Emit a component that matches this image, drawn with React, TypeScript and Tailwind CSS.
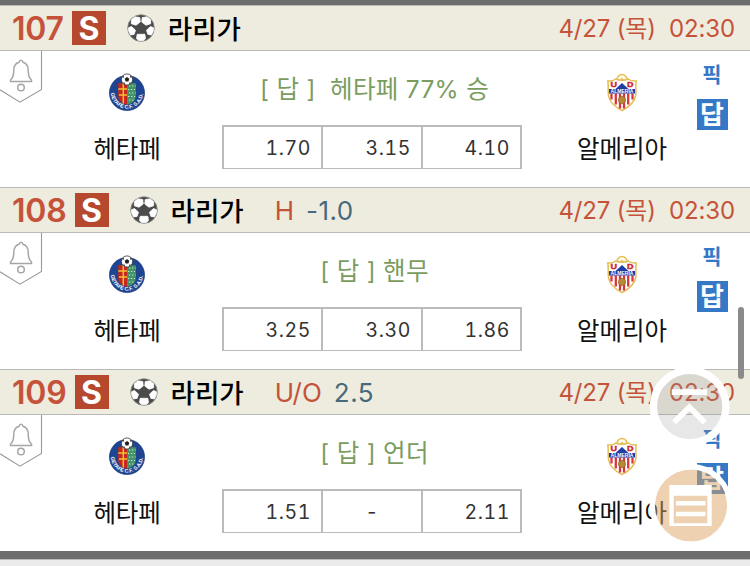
const KR = "font-['Inter','Noto_Sans_CJK_KR',sans-serif]";

type Match = {
  no: string;
  kind?: string;
  line?: string;
  tip: string;
  odds: string[];
};

const matches: Match[] = [
  { no: '107', tip: '[ 답 ]\u00a0\u00a0헤타페 77% 승', odds: ['1.70', '3.15', '4.10'] },
  { no: '108', kind: 'H', line: '-1.0', tip: '[ 답 ] 핸무', odds: ['3.25', '3.30', '1.86'] },
  { no: '109', kind: 'U/O', line: '2.5', tip: '[ 답 ] 언더', odds: ['1.51', '-', '2.11'] },
];

function Ball() {
  return (
    <svg width="28" height="28" viewBox="0 0 28 28" className="shrink-0">
      <circle cx="14" cy="14" r="13.3" fill="#4b4b4b" stroke="#8b8b88" strokeWidth="0.8" />
      <g fill="#fff" stroke="#fff" strokeWidth="0.8" strokeLinejoin="round">
        <path d="M4.500 5.500 8 2.800l4.800.8.400 4.400-4.200 3.200-4.700-1.500z" />
        <path d="M23.500 5.500 20 2.800l-4.800.8-.4 4.400 4.200 3.200 4.700-1.500z" />
        <path d="M1.400 13.800 4.500 12.500l4 3.700-1.400 4.200-3.400.5C2 18.700 1.300 16 1.400 13.800z" />
        <path d="M26.600 13.800 23.500 12.500l-4 3.700 1.400 4.200 3.400.5c1.700-2.200 2.400-4.900 2.300-7.100z" />
        <path d="M10.200 20.300h7.600l.7 4.300-2 2h-5l-2-2z" />
      </g>
    </svg>
  );
}

function Bell() {
  return (
    <svg width="43" height="53" viewBox="0 0 43 53" fill="none" className="block">
      <path d="M41.500 0V38.500L20 51.200 0 38.800" stroke="#999" strokeWidth="1.100" />
      <g stroke="#a6a6a6" strokeWidth="1.500">
        <path d="M21 9.300c-1 0-1.700.8-1.900 1.900-3.600.9-5.300 4-5.300 8 0 6-1.100 8-3.300 9.800v1.500h21V29c-2.200-1.800-3.300-3.800-3.300-9.800 0-4-1.700-7.100-5.300-8-.2-1.100-.9-1.900-1.900-1.900z" />
        <circle cx="21" cy="36.500" r="3.300" />
      </g>
    </svg>
  );
}

function Getafe() {
  return (
    <svg width="38" height="40" viewBox="0 0 38 40" className="block">
      <defs>
        <path id="ring" d="M2.800 19a16.200 16.600 0 0 0 32.400 0" />
      </defs>
      <circle cx="19" cy="20" r="17.600" fill="#1e4494" stroke="#16326f" strokeWidth="0.600" />
      <path d="M10 10h9v22c-5-1.500-9-4-9-9z" fill="#c9251f" />
      <path d="M19 10h9v13c0 5-4 7.500-9 9z" fill="#43946a" />
      <path d="M10 16h9M15.300 10v21M11 22h8" stroke="#f2c230" strokeWidth="1.500" />
      <path d="M21 13h7M20 16.500h7M21 20h7M20 23.500h7M21 27h5" stroke="#cfe5d6" strokeWidth="1.200" strokeDasharray="1.300 1.700" />
      <path d="M10 10h18v13c0 5-4 7.500-9 9-5-1.500-9-4-9-9z" fill="none" stroke="#2b4d68" strokeWidth="0.500" />
      <text fill="#fff" fontSize="5.200" fontWeight="800" fontFamily="Liberation Sans, sans-serif">
        <textPath href="#ring" startOffset="1">GETAFE C.F. S.A.D.</textPath>
      </text>
      <circle cx="19" cy="6.500" r="5.600" fill="#fff" stroke="#333" strokeWidth="0.800" />
      <path d="m19 4 2.300 1.700-.9 2.800h-2.800l-.9-2.800zM14 4l2-1.500-.5 2.500zM24 4 22 2.500l.5 2.500zM15 9.500l2 .3-.5 1.700zM23 9.500l-2 .3.500 1.700z" fill="#222" />
    </svg>
  );
}

function Almeria() {
  return (
    <svg width="32" height="40" viewBox="0 0 32 40" className="block">
      <circle cx="16" cy="6.500" r="5" fill="#fffbe8" stroke="#e4be56" strokeWidth="1.500" />
      <path d="M1.800 8c4 .3 6-.5 8-2 3 1.500 9.400 1.500 12.400 0 2 1.500 4 2.300 8 2-1 5 .3 9-.5 14.500C28.500 29.500 22 34.500 16 37.500 10 34.500 3.500 29.500 2.500 22.500 1.700 17 2.800 13 1.800 8z" fill="#fff" stroke="#e4be56" strokeWidth="1.500" />
      <path d="M5.500 20.500v6M9.800 20.500v11M14 20.500v15M18 20.500v15M22.200 20.500v11M26.500 20.500v6" stroke="#d7373c" strokeWidth="2.300" />
      <circle cx="16" cy="6.500" r="1.500" fill="#e4be56" />
      <path d="m16 10 7 6.500H9z" fill="#1d3fa5" />
      <path d="M3 16h26v4.500H3z" fill="#2036a0" />
      <circle cx="16" cy="27" r="3.600" fill="#b98a35" stroke="#8b6724" strokeWidth="0.700" />
      <g fontFamily="Liberation Sans, sans-serif" fontWeight="800">
        <text x="4.500" y="14.300" fontSize="7" fill="#cf2630" stroke="#cf2630" strokeWidth="0.400" textLength="6.500" lengthAdjust="spacingAndGlyphs">U</text>
        <text x="21" y="14.300" fontSize="7" fill="#cf2630" stroke="#cf2630" strokeWidth="0.400" textLength="6.500" lengthAdjust="spacingAndGlyphs">D</text>
        <text x="4.500" y="19.900" fontSize="4.500" fill="#fff" textLength="23" lengthAdjust="spacingAndGlyphs">ALMERIA</text>
      </g>
    </svg>
  );
}

function Row({ m }: { m: Match }) {
  return (
    <section className="h-[182px]">
      <header className="flex h-[46px] items-center border-y border-[#b9b9b9] bg-[#eeecdf] pl-3 pr-[15px] whitespace-nowrap">
        <span className="pt-0.5 text-[32px] font-[560] leading-[42px] tracking-[-0.2px] text-[#c5533a]">{m.no}</span>
        <span className="ml-2 flex size-[34px] shrink-0 items-center justify-center bg-[#b5482d] pt-px text-[32px] font-bold leading-[33px] text-white">S</span>
        <span className="ml-[21px] flex"><Ball /></span>
        <span className="ml-[13px] pt-0.5 text-[26.500px] font-medium leading-[42px] text-black">라리가</span>
        {m.kind && (
          <span className="ml-[31px] flex gap-3 pt-0.5 text-[26px] leading-[42px] text-[#c5533a]">
            {m.kind}
            <span className="tracking-[0.5px] text-[#48697c]">{m.line}</span>
          </span>
        )}
        <span className="ml-auto pt-0.5 text-[24px] leading-[42px] tracking-[-0.15px] text-[#c5533a]">4/27 (목)&nbsp; 02:30</span>
      </header>
      <div className="flex h-[136px] bg-white">
        <div className="w-[43px] shrink-0"><Bell /></div>
        <div className="flex w-[168px] shrink-0 flex-col items-center pt-[22px]">
          <Getafe />
          <span className="mt-[18px] text-[24.500px] leading-9 tracking-[-0.2px] text-[#111]">헤타페</span>
        </div>
        <div className="ml-[11px] flex w-[300px] shrink-0 flex-col items-center">
          <div className="flex h-[74px] items-center pt-[3px] pl-[5px] text-[24.500px] tracking-[0.3px] whitespace-nowrap text-[#7a9d5f]">{m.tip}</div>
          <div className="grid h-11 w-[300px] grid-cols-[99px_100px_99px] border-t-2 border-b border-l-2 border-[#bbb]">
            {m.odds.map((o, i) => (
              <span
                key={i}
                className={`flex items-center border-r-2 border-[#bbb] pt-[3px] text-[19.500px] tracking-[0.600px] tabular-nums text-[#333] ${o === '-' ? 'justify-center' : 'justify-end pr-2.5'}`}
              >
                {o}
              </span>
            ))}
          </div>
        </div>
        <div className="ml-[34px] flex w-[132px] shrink-0 flex-col items-center pt-[22px]">
          <Almeria />
          <span className="mt-[18px] text-[24.500px] leading-9 tracking-[-0.1px] text-[#111]">알메리아</span>
        </div>
        <div className="ml-2 flex w-8 flex-col items-center pt-[9px]">
          <span className="h-[39px] text-[21px] font-bold leading-[30px] text-[#3478c6]">픽</span>
          <span className="flex h-[31px] w-[31px] items-center justify-center bg-[#3478c6] pt-px text-[26px] font-bold leading-[30px] text-white">답</span>
        </div>
      </div>
    </section>
  );
}

export default function App() {
  return (
    <main className={`relative h-[566px] w-[750px] overflow-hidden bg-[#ebebeb] ${KR}`}>
      <div className="h-[5px] bg-[#6d6d6d]" />
      {matches.map((m) => (
        <Row key={m.no} m={m} />
      ))}
      <div className="h-[9px] border-b border-[#bbb] bg-[#6d6d6d]" />
      <div className="absolute top-[307px] left-[738px] h-[72px] w-1.5 rounded-full bg-[#8a8a8a]" />
      <svg className="absolute top-[366px] left-[649px]" width="84" height="184" viewBox="0 0 84 184" fill="none">
        <circle cx="40.700" cy="40.500" r="33" fill="#999" fillOpacity="0.230" />
        <circle cx="40.700" cy="40.500" r="36.300" stroke="#fff" strokeWidth="7.400" />
        <path d="M22.700 26.200H58M25 56.500l15.400-15.300 15.400 15.300" stroke="#fff" strokeWidth="5.700" />
        <circle cx="42" cy="139.500" r="36.200" fill="#dba361" fillOpacity="0.500" />
        <circle cx="42" cy="139.500" r="38.800" stroke="#fff" strokeWidth="5.400" />
        <path fillRule="evenodd" d="M20.300 119h42.400v41H20.300zM24.700 129.700v27.600h33.600v-27.600z" fill="#fff" />
        <path d="M27 137.200h29.500M27 148h29.500" stroke="#fff" strokeWidth="4.400" />
      </svg>
    </main>
  );
}
